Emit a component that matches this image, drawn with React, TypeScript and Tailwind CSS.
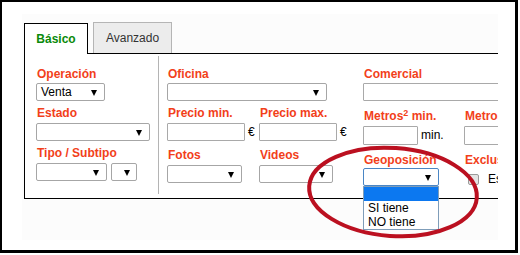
import React from "react";

const label = "h-[14px] leading-[14px] pl-[1px] font-bold text-[#f2401a] whitespace-nowrap";

function Arrow() {
  return (
    <svg width="6" height="7" viewBox="0 0 6 7" className="shrink-0">
      <polygon points="0,1 6,1 3,7" fill="#000" />
    </svg>
  );
}

function Select({ w, text, className = "" }: { w: string; text?: string; className?: string }) {
  return (
    <div
      className={`${w} h-[18px] border border-[#a6a6a6] rounded-[2px] bg-white flex items-center justify-between pl-[4px] pr-[7px] ${className}`}
    >
      <span className="leading-[14px]">{text}</span>
      <Arrow />
    </div>
  );
}

function Input({ w, h = "h-[18px]" }: { w: string; h?: string }) {
  return <div className={`${w} ${h} border border-[#a9a9a9] rounded-[1px] bg-white shrink-0`} />;
}

export default function App() {
  return (
    <div className="relative w-[520px] h-[255px] bg-white text-[12px] text-black font-['Liberation_Sans',Arial,sans-serif]">
      <div className="w-[518px] h-[253px] border-l-2 border-t-2 border-r-[3px] border-b-[3px] border-black pl-[20px] pt-[12px]">
        <div className="w-[476px] h-[226px] bg-[#fcfcfc] pl-[2px] pt-[8px]">
          {/* tabs */}
          <div className="flex items-end gap-[5px]">
            <div className="relative z-10 w-[64px] h-[31px] -mb-px border-l border-t border-r border-black bg-white flex items-center justify-center">
              <span className="font-bold text-[#0a8a0a] leading-[14px]">Básico</span>
            </div>
            <div className="w-[79px] h-[31px] border-l border-t border-r border-[#b5b5b5] bg-[#ececec] flex items-center justify-center">
              <span className="text-[#333] leading-[14px]">Avanzado</span>
            </div>
          </div>

          {/* panel */}
          <div className="relative w-[474px] h-[146px] border-t border-l border-b border-black bg-white flex overflow-x-clip">
            {/* column 1 */}
            <div className="ml-[11px] w-[114px] pt-[13px] flex flex-col shrink-0">
              <div className={label}>Operación</div>
              <Select w="w-[69px]" text="Venta" className="mt-[2px]" />
              <div className={`${label} mt-[5px]`}>Estado</div>
              <Select w="w-[114px]" className="mt-[3px]" />
              <div className={`${label} mt-[5px]`}>Tipo / Subtipo</div>
              <div className="flex gap-[4px] mt-[3px]">
                <Select w="w-[71px]" />
                <Select w="w-[26px]" className="!pr-[6px]" />
              </div>
            </div>

            {/* separator */}
            <div className="ml-[8px] w-px bg-[#b4b4b4] mt-[2px] mb-[4px] shrink-0" />

            {/* column 2 */}
            <div className="ml-[8px] pt-[13px] flex flex-col shrink-0">
              <div className={label}>Oficina</div>
              <Select w="w-[160px]" className="mt-[2px]" />
              <div className="flex">
                <div className="w-[92px] flex flex-col">
                  <div className={`${label} mt-[5px]`}>Precio min.</div>
                  <div className="flex items-center mt-[3px]">
                    <Input w="w-[78px]" />
                    <span className="ml-[3px] leading-[14px]">€</span>
                  </div>
                  <div className={`${label} mt-[7px]`}>Fotos</div>
                  <Select w="w-[75px]" className="mt-[3px]" />
                </div>
                <div className="w-[92px] flex flex-col">
                  <div className={`${label} mt-[5px]`}>Precio max.</div>
                  <div className="flex items-center mt-[3px]">
                    <Input w="w-[78px]" />
                    <span className="ml-[3px] leading-[14px]">€</span>
                  </div>
                  <div className={`${label} mt-[7px]`}>Videos</div>
                  <Select w="w-[74px]" className="mt-[3px]" />
                </div>
              </div>
            </div>

            {/* column 3 */}
            <div className="ml-[12px] pt-[13px] flex flex-col shrink-0">
              <div className={label}>Comercial</div>
              <Input w="w-[200px]" h="h-[18px] mt-[2px]" />
              <div className="flex">
                <div className="w-[101px] flex flex-col">
                  <div className={`${label} mt-[5px] pt-[3px] !h-[17px]`}>
                    Metros<sup>2</sup> min.
                  </div>
                  <div className="flex mt-[3px]">
                    <Input w="w-[55px]" h="h-[19px]" />
                    <span className="ml-[3px] leading-[14px] self-end mb-[3px]">min.</span>
                  </div>
                  <div className={`${label} mt-[8px]`}>Geoposición</div>
                  <div className="relative mt-px w-[76px]">
                    <div className="w-[76px] h-[18px] border border-[#4a86c5] rounded-[2px] bg-white flex items-center justify-end pr-[7px]">
                      <Arrow />
                    </div>
                    <div className="absolute left-0 top-full z-20 w-[76px] border border-[#7f9db9] bg-white">
                      <div className="h-[14px] bg-[#0c78f0]" />
                      <div className="h-[14px] leading-[14px] pl-[4px]">SI tiene</div>
                      <div className="h-[14px] leading-[14px] pl-[4px]">NO tiene</div>
                    </div>
                  </div>
                </div>
                <div className="w-[110px] flex flex-col">
                  <div className={`${label} mt-[5px] pt-[3px] !h-[17px]`}>
                    Metros<sup>2</sup> max.
                  </div>
                  <div className="flex mt-[3px]">
                    <Input w="w-[55px]" h="h-[19px]" />
                  </div>
                  <div className={`${label} mt-[8px]`}>Exclusiva</div>
                  <div className="flex items-center mt-[5px] ml-[4px]">
                    <div className="w-[11px] h-[11px] border border-[#9a9a9a] rounded-[2px] bg-[#e4e4e4]" />
                    <span className="ml-[9px] leading-[14px]">Es exclusiva</span>
                  </div>
                </div>
              </div>
            </div>
          </div>
        </div>
      </div>

      {/* highlight ellipse */}
      <svg className="absolute left-0 top-0 pointer-events-none z-30" width="520" height="255">
        <ellipse
          cx="393"
          cy="192"
          rx="84"
          ry="44"
          fill="none"
          stroke="#bb1020"
          strokeWidth="4"
          transform="rotate(4 393 192)"
        />
      </svg>
    </div>
  );
}
